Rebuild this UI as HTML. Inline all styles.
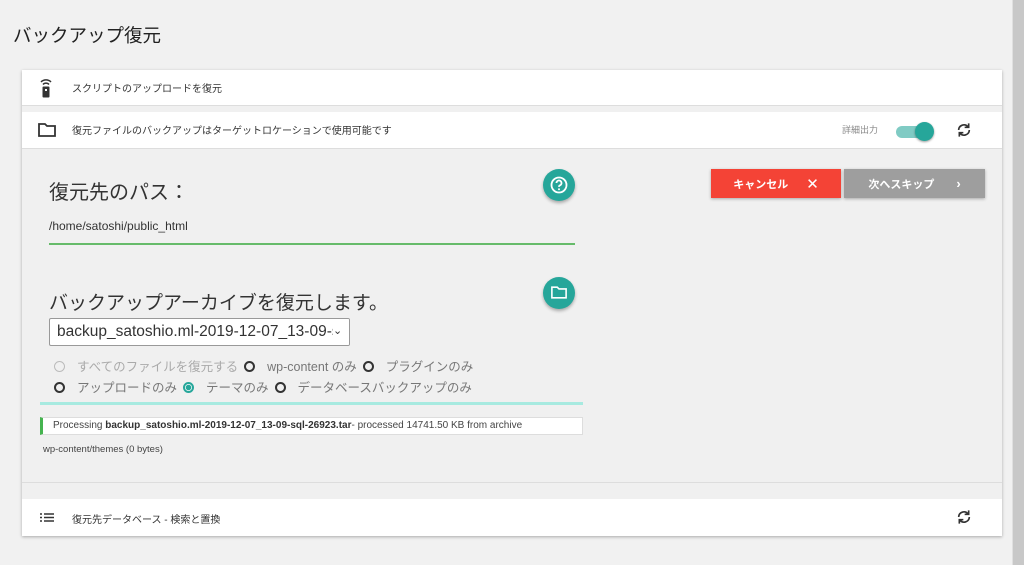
<!DOCTYPE html>
<html><head><meta charset="utf-8"><style>
*{box-sizing:border-box;margin:0;padding:0}
body{width:1024px;height:565px;background:#f1f1f1;font-family:"Liberation Sans","Noto Sans CJK JP",sans-serif;position:relative;overflow:hidden;color:#333}
.abs{position:absolute}
.sb{left:1012px;top:0;width:12px;height:565px;background:#c8c8c8;border-left:1px solid #e0e0e0}
h1{position:absolute;left:13px;top:22px;font-size:18.5px;font-weight:normal;color:#222}
.card{left:22px;top:70px;width:980px;height:466px;background:#f0f0f0;box-shadow:0 1px 3px rgba(0,0,0,.3)}
.row{position:absolute;left:0;width:980px;background:#fff;font-size:10px;color:#333}
.btn{position:absolute;height:29px;color:#fff;font-size:11px;font-weight:bold;display:flex;align-items:center;justify-content:center;box-shadow:0 1px 3px rgba(0,0,0,.3)}
.rad{display:inline-block;width:11px;height:11px;border:2px solid #333;border-radius:50%;vertical-align:-1px;margin-right:12px}
.rl{font-size:12.5px;color:#777;margin-right:6px}
</style></head><body>
<div class="abs sb"></div>
<h1>バックアップ復元</h1>
<div class="abs card">
 <div class="row" style="top:0;height:36px;border-bottom:1px solid #ddd">
  <svg class="abs" style="left:18px;top:8px" width="12" height="20" viewBox="0 0 12 20"><path d="M1 4a7 7 0 0 1 10 0M3 6.5a4 4 0 0 1 6 0" stroke="#333" stroke-width="1.5" fill="none"/><rect x="2.5" y="8.5" width="7" height="11" rx="1" fill="#333"/><rect x="5" y="11" width="2" height="2" fill="#fff"/></svg>
  <span class="abs" style="left:50px;top:10px">スクリプトのアップロードを復元</span>
 </div>
 <div class="row" style="top:42px;height:37px;border-bottom:1px solid #ddd">
  <svg class="abs" style="left:16px;top:11px" width="18" height="14" viewBox="0 0 18 14"><path d="M1 1h6l2 2h8v10H1z" stroke="#333" stroke-width="1.8" fill="none"/></svg>
  <span class="abs" style="left:50px;top:10px">復元ファイルのバックアップはターゲットロケーションで使用可能です</span>
  <span class="abs" style="left:820px;top:11px;font-size:9px;color:#888">詳細出力</span>
  <div class="abs" style="left:874px;top:14px;width:34px;height:12px;border-radius:6px;background:#80cbc4"></div>
  <div class="abs" style="left:893px;top:10px;width:19px;height:19px;border-radius:50%;background:#26a69a;box-shadow:0 1px 2px rgba(0,0,0,.4)"></div>
  <svg class="abs" style="left:934px;top:10px" width="16" height="16" viewBox="0 0 24 24"><path d="M4 12a8 8 0 0 1 14-5M20 12a8 8 0 0 1-14 5" stroke="#333" stroke-width="2.5" fill="none"/><path d="M19 2v6h-6M5 22v-6h6" stroke="#333" stroke-width="2.5" fill="none"/></svg>
 </div>
 <div class="abs" style="left:27px;top:106px;font-size:20px;color:#333">復元先のパス：</div>
 <div class="abs" style="left:521px;top:99px;width:32px;height:32px;border-radius:50%;background:#26a69a;box-shadow:0 2px 3px rgba(0,0,0,.3)"><svg style="margin:7px" width="18" height="18" viewBox="0 0 18 18"><circle cx="9" cy="9" r="7.5" stroke="#fff" stroke-width="1.8" fill="none"/><path d="M6.5 7a2.5 2.5 0 1 1 3.5 2.3c-.7.3-1 .8-1 1.6" stroke="#fff" stroke-width="1.8" fill="none"/><circle cx="9" cy="13.2" r="1" fill="#fff"/></svg></div>
 <div class="abs" style="left:27px;top:149px;font-size:12px;color:#333">/home/satoshi/public_html</div>
 <div class="abs" style="left:27px;top:173px;width:526px;height:2px;background:#66bb6a"></div>
 <div class="btn" style="left:689px;top:99px;width:130px;background:#f44336">キャンセル<span style="margin-left:18px;font-size:15px;font-weight:normal">✕</span></div>
 <div class="btn" style="left:822px;top:99px;width:141px;background:#9e9e9e">次へスキップ<span style="margin-left:22px;font-size:13px">›</span></div>
 <div class="abs" style="left:27px;top:218px;font-size:19px;color:#333">バックアップアーカイブを復元します。</div>
 <div class="abs" style="left:521px;top:207px;width:32px;height:32px;border-radius:50%;background:#26a69a;box-shadow:0 2px 3px rgba(0,0,0,.3)"><svg style="margin:9px 8px" width="16" height="13" viewBox="0 0 18 14"><path d="M1 1h6l2 2h8v10H1z" stroke="#fff" stroke-width="1.8" fill="none"/></svg></div>
 <div class="abs" style="left:27px;top:248px;width:301px;height:28px;border:1px solid #999;border-radius:2px;background:#fff;font-size:15.5px;padding:4px 7px;color:#333;white-space:nowrap;overflow:hidden">backup_satoshio.ml-2019-12-07_13-09-sql-26923.tar<span class="abs" style="right:0;top:0;height:26px;width:16px;font-size:11px;background:#fff;padding-top:5px">⌄</span></div>
 <div class="abs" style="left:32px;top:286px;white-space:nowrap"><span class="rad" style="border-color:#bbb;border-width:1px"></span><span class="rl" style="color:#aaa">すべてのファイルを復元する</span><span class="rad"></span><span class="rl">wp-content のみ</span><span class="rad"></span><span class="rl">プラグインのみ</span></div>
 <div class="abs" style="left:32px;top:307px;white-space:nowrap"><span class="rad"></span><span class="rl">アップロードのみ</span><span class="rad" style="border-color:#26a69a;background:radial-gradient(#26a69a 2.5px,#fff 3px)"></span><span class="rl">テーマのみ</span><span class="rad"></span><span class="rl">データベースバックアップのみ</span></div>
 <div class="abs" style="left:18px;top:332px;width:543px;height:3px;background:#a7eae0"></div>
 <div class="abs" style="left:18px;top:347px;width:543px;height:18px;background:#fff;border:1px solid #ddd;border-left:3px solid #46b450;font-size:10px;padding:2px 10px;white-space:nowrap;color:#444;overflow:hidden">Processing <b style="color:#333">backup_satoshio.ml-2019-12-07_13-09-sql-26923.tar</b>- processed 14741.50 KB from archive</div>
 <div class="abs" style="left:21px;top:374px;font-size:9.5px;color:#444">wp-content/themes (0 bytes)</div>
 <div class="abs" style="left:0;top:412px;width:980px;height:1px;background:#ddd"></div>
 <div class="row" style="top:429px;height:37px">
  <svg class="abs" style="left:18px;top:14px" width="14" height="9" viewBox="0 0 14 9"><path d="M0 1h2M4 1h10M0 4.5h2M4 4.5h10M0 8h2M4 8h10" stroke="#333" stroke-width="1.6"/></svg>
  <span class="abs" style="left:50px;top:12px">復元先データベース - 検索と置換</span>
  <svg class="abs" style="left:934px;top:10px" width="16" height="16" viewBox="0 0 24 24"><path d="M4 12a8 8 0 0 1 14-5M20 12a8 8 0 0 1-14 5" stroke="#333" stroke-width="2.5" fill="none"/><path d="M19 2v6h-6M5 22v-6h6" stroke="#333" stroke-width="2.5" fill="none"/></svg>
 </div>
</div>
</body></html>
